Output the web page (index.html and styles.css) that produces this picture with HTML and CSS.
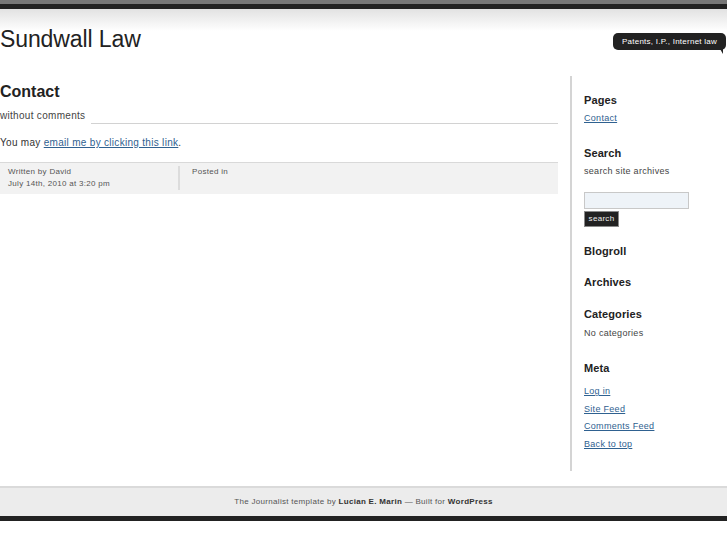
FILE: index.html
```html
<!DOCTYPE html>
<html>
<head>
<meta charset="utf-8">
<link rel="stylesheet" href="styles.css">
</head>
<body>
<div class="bar-top"></div>
<div class="bar-dark"></div>
<header class="header">
  <h1 class="site-title">Sundwall Law</h1>
  <div class="tagline">Patents, I.P., Internet law</div>
</header>
<div class="wrap">
  <main class="main">
    <h2 class="post-title">Contact</h2>
    <div class="byline"><span>without comments</span><span class="rule"></span></div>
    <p class="entry">You may <a href="#">email me by clicking this link</a>.</p>
    <div class="postmeta">
      <div class="meta-col meta-author">Written by David<br>July 14th, 2010 at 3:20 pm</div>
      <div class="meta-col meta-cat">Posted in</div>
    </div>
  </main>
  <aside class="sidebar">
    <div class="widget w-pages">
      <h3>Pages</h3>
      <ul><li><a href="#">Contact</a></li></ul>
    </div>
    <div class="widget w-search">
      <h3>Search</h3>
      <p class="note">search site archives</p>
      <input class="search-input" type="text">
      <button class="search-btn">search</button>
    </div>
    <div class="widget w-empty"><h3>Blogroll</h3></div>
    <div class="widget w-empty"><h3>Archives</h3></div>
    <div class="widget w-cat">
      <h3>Categories</h3>
      <p class="note">No categories</p>
    </div>
    <div class="widget w-meta">
      <h3>Meta</h3>
      <ul>
        <li><a href="#">Log in</a></li>
        <li><a href="#">Site Feed</a></li>
        <li><a href="#">Comments Feed</a></li>
        <li><a href="#">Back to top</a></li>
      </ul>
    </div>
  </aside>
</div>
<footer class="footer">
  The Journalist template by <b>Lucian E. Marin</b> — Built for <b>WordPress</b>
</footer>
<div class="bar-dark"></div>
</body>
</html>
```

FILE: styles.css
```css
html, body {
  margin: 0;
  padding: 0;
  background: #fff;
}
body {
  font-family: "Liberation Sans", Arial, sans-serif;
  color: #444;
  letter-spacing: 0.3px;
}
a {
  color: #2f6190;
  text-decoration: underline;
}
.bar-top {
  height: 4px;
  background: #777;
}
.bar-dark {
  height: 5px;
  background: #222;
}
.header {
  display: flex;
  justify-content: space-between;
  align-items: flex-start;
  padding-top: 16px;
  background: linear-gradient(to bottom, #e2e2e2 0, #f4f4f4 14px, #fff 22px);
}
.site-title {
  margin: 0;
  font-size: 23px;
  line-height: 28px;
  font-weight: normal;
  color: #222;
  letter-spacing: -0.1px;
}
.tagline {
  position: relative;
  margin: 8px 1px 0 0;
  width: 113px;
  height: 17px;
  line-height: 17px;
  background: #222;
  color: #fff;
  font-size: 8px;
  letter-spacing: 0.25px;
  text-align: center;
  border-radius: 5px;
}
.tagline::after {
  content: "";
  position: absolute;
  right: 3px;
  bottom: -4px;
  border-style: solid;
  border-width: 5px 0 0 3px;
  border-color: #222 transparent transparent transparent;
}
.wrap {
  display: flex;
  margin-top: 23px;
}
.main {
  width: 558px;
  flex: none;
}
.post-title {
  margin: 6px 0 0;
  font-size: 16px;
  line-height: 20px;
  color: #222;
  letter-spacing: 0;
}
.byline {
  display: flex;
  align-items: flex-end;
  margin-top: 7px;
  font-size: 10px;
  line-height: 14px;
  color: #444;
}
.rule {
  flex: 1;
  margin-left: 6px;
  border-top: 1px solid #d2d2d2;
  margin-bottom: -1px;
}
.entry {
  margin: 13px 0 0;
  font-size: 10px;
  line-height: 14px;
  color: #333;
}
.postmeta {
  display: flex;
  margin-top: 12px;
  padding: 3px 0 4px;
  background: #f2f2f2;
  border-top: 1px solid #d9d9d9;
  font-size: 8px;
  line-height: 12px;
  color: #555;
}
.meta-author {
  width: 170px;
  padding-left: 8px;
  border-right: 2px solid #dcdcdc;
}
.meta-cat {
  padding-left: 12px;
}
.sidebar {
  flex: 1;
  margin-left: 12px;
  padding: 17px 0 18px 12px;
  border-left: 2px solid #d4d4d4;
}
.widget h3 {
  margin: 0;
  font-size: 11px;
  line-height: 14px;
  color: #222;
  letter-spacing: 0.1px;
}
.widget ul {
  list-style: none;
  margin: 0;
  padding: 0;
  font-size: 9px;
}
.note {
  margin: 4px 0 0;
  font-size: 9px;
  line-height: 14px;
  color: #444;
}
.w-pages ul {
  margin-top: 4px;
  line-height: 14px;
}
.w-search {
  margin-top: 21px;
}
.search-input {
  display: block;
  box-sizing: border-box;
  width: 105px;
  height: 17px;
  margin: 14px 0 0;
  padding: 0;
  border: 1px solid #c8c8c8;
  background: #eef3f8;
}
.search-btn {
  display: block;
  box-sizing: border-box;
  height: 16px;
  width: 35px;
  margin: 2px 0 0;
  padding: 0;
  border: 1px solid #8a8a8a;
  background: #222;
  color: #eee;
  font-family: "Liberation Sans", Arial, sans-serif;
  font-size: 8px;
  letter-spacing: 0.3px;
  line-height: 14px;
}
.w-empty, .w-cat {
  margin-top: 18px;
}
.w-search + .w-empty {
  margin-top: 17px;
}
.w-empty + .w-empty {
  margin-top: 17px;
}
.w-cat .note {
  margin-top: 5px;
}
.w-meta {
  margin-top: 21px;
}
.w-meta ul {
  margin-top: 8px;
  line-height: 17.5px;
}
.footer {
  margin-top: 15px;
  border-top: 2px solid #dadada;
  background: #ececec;
  height: 28px;
  line-height: 28px;
  text-align: center;
  font-size: 8px;
  color: #555;
}
.footer b {
  color: #333;
}
```
